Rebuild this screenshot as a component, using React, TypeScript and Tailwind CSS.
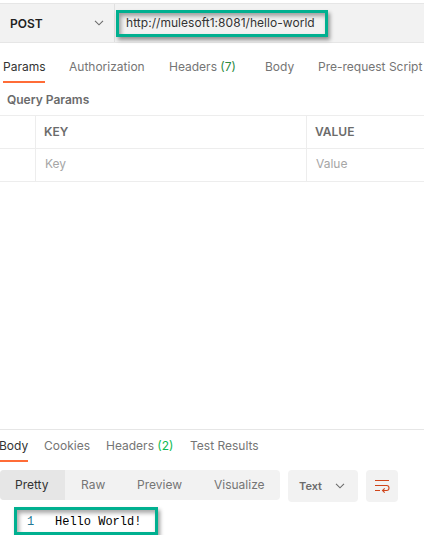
import React from "react";

type Tab = { label: string; count?: string; box: string; active?: boolean };

const requestTabs: Tab[] = [
  { label: "Params", box: "w-[42px] mr-[24px]", active: true },
  { label: "Authorization", box: "w-[75px] mr-[25px]" },
  { label: "Headers", count: "(7)", box: "w-[68px] mr-[28px]" },
  { label: "Body", box: "w-[29px] mr-[24px]" },
  { label: "Pre-request Script", box: "w-[105px]" },
];

const responseTabs: Tab[] = [
  { label: "Body", box: "w-[29px] mr-[16px]", active: true },
  { label: "Cookies", box: "w-[46px] mr-[16px]" },
  { label: "Headers", count: "(2)", box: "w-[68px] mr-[16px]" },
  { label: "Test Results", box: "w-[70px]" },
];

function Tabs({ items, countColor }: { items: Tab[]; countColor: string }) {
  return (
    <>
      {items.map((t) => (
        <div
          key={t.label}
          className={`${t.box} h-full shrink-0 whitespace-nowrap border-b-2 ${
            t.active ? "border-[#ff6c37] text-[#333]" : "border-transparent text-[#757575]"
          }`}
        >
          {t.label}
          {t.count && <span className={countColor}> {t.count}</span>}
        </div>
      ))}
    </>
  );
}

function Chevron() {
  return (
    <svg width="10" height="6" viewBox="0 0 10 6" fill="none" stroke="#6b6b6b" strokeWidth="1.1">
      <path d="M1 .8 5 4.8 9 .8" />
    </svg>
  );
}

export default function App() {
  return (
    <div className="h-[535px] w-[424px] overflow-hidden bg-white pt-[3px] font-['Inter',sans-serif] text-[12px] leading-4">
      <div className="flex h-10 border-y border-[#e6e6e6] bg-[#f2f2f2]">
        <div className="flex w-[115px] shrink-0 items-center justify-between border-r border-[#e0e0e0] pl-[10px] pr-[10px]">
          <span className="pt-0.5 font-semibold text-[#212121]">POST</span>
          <Chevron />
        </div>
        <div className="ml-px mt-[6px] h-[27px] w-[212px] border-[3px] border-[#00b090] pl-[7px] pt-px leading-[17px] tracking-[0.04px] text-[#333] shadow-[2px_3px_4px_rgba(0,0,0,0.4),inset_2px_3px_4px_rgba(0,0,0,0.35)]">
          http://mulesoft1:8081/hello-world
        </div>
      </div>

      <div className="mt-4 flex h-6 pl-[3px]">
        <Tabs items={requestTabs} countColor="text-[#2b8a3e]" />
      </div>
      <div className="mt-[9px] h-[23px] pl-[7px] font-semibold text-[#6b6b6b]">Query Params</div>

      <div className="grid grid-cols-[36px_271px_117px] grid-rows-[33px_33px] border-t border-[#ededed] leading-[31px]">
        <div className="border-b border-r border-[#ededed]" />
        <div className="border-b border-r border-[#ededed] pl-2 font-semibold text-[#6b6b6b]">KEY</div>
        <div className="border-b border-[#ededed] pl-2 font-semibold text-[#6b6b6b]">VALUE</div>
        <div className="border-b border-r border-[#ededed]" />
        <div className="border-b border-r border-[#ededed] pl-[9px] leading-[30px] text-[#a6a6a6]">Key</div>
        <div className="border-b border-[#ededed] pl-[9px] leading-[30px] text-[#a6a6a6]">Value</div>
      </div>

      <div className="mt-[247px] border-t border-[#e6e6e6] pt-2">
        <div className="-ml-px flex h-6">
          <Tabs items={responseTabs} countColor="text-[#0cbb52]" />
        </div>
      </div>

      <div className="mt-2 flex h-8 items-start text-[#757575]">
        <div className="flex h-[30px] w-[280px] overflow-hidden rounded bg-[#f2f2f2] leading-[30px]">
          <span className="w-[65px] bg-[#e6e6e6] pl-[15px] text-[#333]">Pretty</span>
          <span className="w-[56px] pl-4">Raw</span>
          <span className="w-[77px] pl-4">Preview</span>
          <span className="pl-4">Visualize</span>
        </div>
        <div className="ml-2 flex h-8 w-[70px] items-center justify-between rounded bg-[#f2f2f2] pl-[11px] pr-[13px] text-[11px] font-semibold text-[#6b6b6b]">
          <span>Text</span>
          <Chevron />
        </div>
        <div className="ml-2 flex h-8 w-8 items-center justify-center rounded bg-[#f2f2f2]">
          <svg width="16" height="16" viewBox="0 0 16 16" fill="none" stroke="#d0451b" strokeWidth="1.1">
            <path d="M1 2.5h14M1 7.5h11.7a2.3 2.5 0 0 1 0 5H8.5M1 12.5h5M10.7 10.3l-2.2 2.2 2.2 2.2" />
          </svg>
        </div>
      </div>

      <div className="ml-[14px] mt-[5px] flex h-7 w-[144px] border-[3px] border-[#00b090] pl-[10px] pt-px font-['Liberation_Mono',monospace] text-[12px] leading-[22px] shadow-[2px_3px_4px_rgba(0,0,0,0.4),inset_2px_3px_4px_rgba(0,0,0,0.35)]">
        <span className="w-7 text-[#237893]">1</span>
        <span className="whitespace-nowrap text-black">Hello World!</span>
      </div>
    </div>
  );
}
